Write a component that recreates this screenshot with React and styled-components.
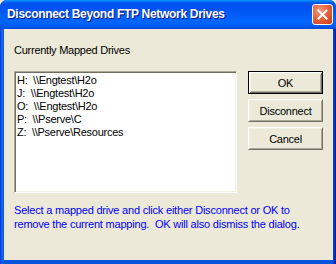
import React from 'react';
import styled, { createGlobalStyle } from 'styled-components';

const GlobalStyle = createGlobalStyle`
  html, body {
    margin: 0;
    padding: 0;
    background: #ece9d8;
  }
`;

const drives = [
  'H:  \\\\Engtest\\H2o',
  'J:  \\\\Engtest\\H2o',
  'O:  \\\\Engtest\\H2o',
  'P:  \\\\Pserve\\C',
  'Z:  \\\\Pserve\\Resources',
];

const Window = styled.div`
  width: 336px;
  height: 264px;
  box-sizing: border-box;
  display: flex;
  flex-direction: column;
  background: #0054e3;
  border-radius: 7px 7px 0 0;
  overflow: hidden;
  font-family: Tahoma, "Liberation Sans", Arial, sans-serif;
`;

const TitleBar = styled.div`
  height: 29px;
  flex-shrink: 0;
  display: flex;
  align-items: center;
  justify-content: space-between;
  padding: 0 3px 0 7px;
  background: linear-gradient(
    to bottom,
    #0997ff 0px,
    #0053ee 3px,
    #0050ee 6px,
    #0066ff 22px,
    #0058ec 27px,
    #0043cf 29px
  );
`;

const Title = styled.span`
  color: #fff;
  font-family: "Trebuchet MS", "Liberation Sans", sans-serif;
  font-weight: bold;
  font-size: 12px;
  letter-spacing: -0.3px;
  text-shadow: 1px 1px 0 #0a1883;
  padding-bottom: 1px;
`;

const CloseButton = styled.div`
  width: 21px;
  height: 21px;
  box-sizing: border-box;
  border: 1px solid #fff;
  border-radius: 3px;
  background: radial-gradient(circle at 35% 30%, #f19b7e 0%, #e5643c 45%, #c83c1a 100%);
  display: flex;
  align-items: center;
  justify-content: center;
  margin-top: -1px;
`;

const Frame = styled.div`
  flex: 1;
  display: flex;
  padding: 0 4px 4px 4px;
  background: linear-gradient(to right, #0831d9 0, #166aee 2px, #0855dd 4px, #0855dd calc(100% - 4px), #001ea0 100%);
`;

const Body = styled.div`
  flex: 1;
  background: #ece9d8;
  padding: 15px 10px 0 10px;
  display: flex;
  flex-direction: column;
  font-size: 11px;
  letter-spacing: -0.25px;
  color: #000;
`;

const Label = styled.div`
  line-height: 13px;
  height: 13px;
  margin-bottom: 14px;
`;

const Row = styled.div`
  display: flex;
  align-items: flex-start;
`;

const ListBox = styled.div`
  width: 223px;
  height: 122px;
  box-sizing: border-box;
  background: #fff;
  border: 1px solid;
  border-color: #aca899 #fff #fff #aca899;
  box-shadow: inset 1px 1px 0 #716f64, inset -1px -1px 0 #f1efe2;
  padding: 2px 2px;
`;

const Item = styled.div`
  white-space: pre;
  line-height: 13px;
  height: 13px;
`;

const Buttons = styled.div`
  display: flex;
  flex-direction: column;
  gap: 5px;
  margin-left: 11px;
`;

const Button = styled.div`
  width: 75px;
  height: 23px;
  box-sizing: border-box;
  display: flex;
  align-items: center;
  justify-content: center;
  background: #ece9d8;
  border: 1px solid;
  border-color: ${p => (p.$default ? '#000' : '#fff #716f64 #716f64 #fff')};
  box-shadow: ${p =>
    p.$default
      ? 'inset 1px 1px 0 #fff, inset -1px -1px 0 #716f64, inset 2px 2px 0 #f1efe2, inset -2px -2px 0 #aca899'
      : 'inset 1px 1px 0 #f1efe2, inset -1px -1px 0 #aca899'};
`;

const Hint = styled.div`
  margin-top: 10px;
  color: #0000ff;
  line-height: 14px;
  letter-spacing: -0.2px;
`;

const App = () => (
  <>
    <GlobalStyle />
    <Window>
      <TitleBar>
        <Title>Disconnect Beyond FTP Network Drives</Title>
        <CloseButton>
          <svg width="11" height="11" viewBox="0 0 11 11">
            <path d="M1.5 1.5 L9.5 9.5 M9.5 1.5 L1.5 9.5" stroke="#fff" strokeWidth="2" strokeLinecap="square" />
          </svg>
        </CloseButton>
      </TitleBar>
      <Frame>
        <Body>
          <Label>Currently Mapped Drives</Label>
          <Row>
            <ListBox>
              {drives.map(d => (
                <Item key={d}>{d}</Item>
              ))}
            </ListBox>
            <Buttons>
              <Button $default>OK</Button>
              <Button>Disconnect</Button>
              <Button>Cancel</Button>
            </Buttons>
          </Row>
          <Hint>
            Select a mapped drive and click either Disconnect or OK to
            <br />
            remove the current mapping.&nbsp; OK will also dismiss the dialog.
          </Hint>
        </Body>
      </Frame>
    </Window>
  </>
);

export default App;
